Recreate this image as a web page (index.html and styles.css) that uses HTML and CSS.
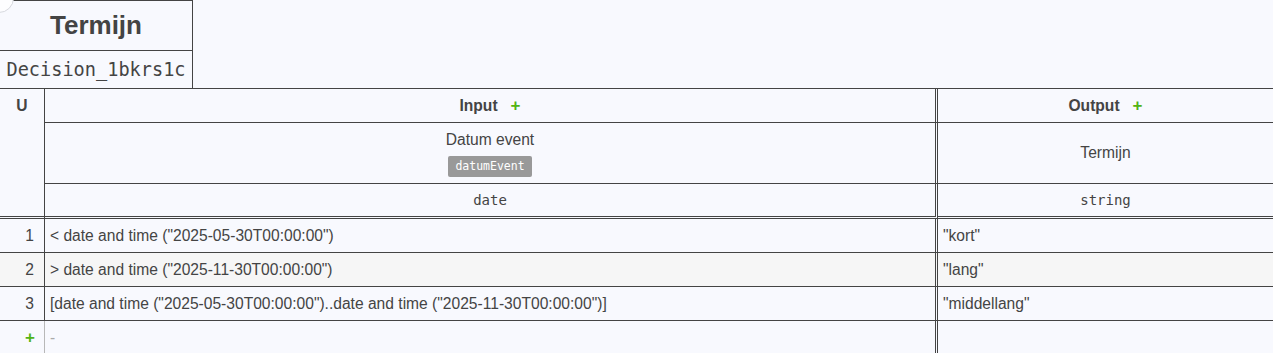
FILE: index.html
```html
<!DOCTYPE html>
<html>
<head>
<meta charset="utf-8">
<link rel="stylesheet" href="styles.css">
</head>
<body>
<div class="page">
  <div class="corner-dot"></div>
  <div class="decision-header">
    <div class="decision-name">Termijn</div>
    <div class="decision-id">Decision_1bkrs1c</div>
  </div>
  <table class="dt">
    <colgroup>
      <col class="c-index">
      <col class="c-input">
      <col class="c-output">
    </colgroup>
    <thead>
      <tr class="r-head">
        <th class="hit" rowspan="3">U</th>
        <th class="input-col">Input<span class="add">+</span></th>
        <th class="output-col">Output<span class="add">+</span></th>
      </tr>
      <tr class="r-label">
        <td class="input-col">
          <div class="label">Datum event</div>
          <span class="badge">datumEvent</span>
        </td>
        <td class="output-col"><div class="label">Termijn</div></td>
      </tr>
      <tr class="r-type">
        <td class="input-col mono">date</td>
        <td class="output-col mono">string</td>
      </tr>
    </thead>
    <tbody>
      <tr class="rule">
        <td class="idx">1</td>
        <td class="input-col">&lt; date and time ("2025-05-30T00:00:00")</td>
        <td class="output-col">"kort"</td>
      </tr>
      <tr class="rule even">
        <td class="idx">2</td>
        <td class="input-col">&gt; date and time ("2025-11-30T00:00:00")</td>
        <td class="output-col">"lang"</td>
      </tr>
      <tr class="rule">
        <td class="idx">3</td>
        <td class="input-col">[date and time ("2025-05-30T00:00:00")..date and time ("2025-11-30T00:00:00")]</td>
        <td class="output-col">"middellang"</td>
      </tr>
      <tr class="add-row">
        <td class="idx add-idx">+</td>
        <td class="input-col dash">-</td>
        <td class="output-col"></td>
      </tr>
    </tbody>
  </table>
</div>
</body>
</html>
```

FILE: styles.css
```css
html, body {
  margin: 0;
  padding: 0;
  background: #f8f9fe;
  overflow: hidden;
}

.page {
  position: relative;
  width: 1273px;
  height: 353px;
  background: #f8f9fe;
  font-family: "Liberation Sans", Arial, sans-serif;
  font-size: 15.6px;
  color: #444;
}

.corner-dot {
  position: absolute;
  left: -16px;
  top: -17px;
  width: 28px;
  height: 28px;
  border-radius: 50%;
  border: 1px solid #d6d8de;
  background: #fdfdff;
  z-index: 2;
}

.decision-header {
  width: 192px;
  border-top: 1px solid #444;
  border-right: 1px solid #444;
}

.decision-name {
  height: 49px;
  border-bottom: 1px solid #444;
  font-weight: bold;
  font-size: 26px;
  display: flex;
  align-items: center;
  justify-content: center;
}

.decision-id {
  height: 37px;
  display: flex;
  align-items: center;
  justify-content: center;
  font-family: "DejaVu Sans Mono", "Liberation Mono", monospace;
  font-size: 18.6px;
}

.dt {
  border-collapse: separate;
  border-spacing: 0;
  table-layout: fixed;
  width: 1273px;
  border-top: 1px solid #444;
}

.c-index { width: 44px; }
.c-input { width: 894px; }
.c-output { width: 335px; }

.dt th, .dt td {
  box-sizing: border-box;
  padding: 0 5px;
  vertical-align: middle;
  border-bottom: 1px solid #444;
  font-weight: normal;
}

.dt .input-col {
  border-left: 1px solid #444;
  border-right: 3px double #444;
}

.dt .hit {
  vertical-align: top;
  text-align: center;
  font-weight: bold;
  line-height: 33px;
  border-bottom: 3px double #444;
  padding: 0;
}

.r-head th {
  height: 34px;
  font-weight: bold;
  text-align: center;
}

.add {
  color: #52b415;
  margin-left: 13px;
  font-weight: bold;
  font-size: 17px;
}

.r-label td {
  height: 61px;
  text-align: center;
}

.label {
  line-height: 20px;
}

.badge {
  display: inline-block;
  margin-top: 6px;
  background: #999;
  color: #fff;
  border-radius: 2px;
  padding: 0 7px;
  height: 21px;
  line-height: 21px;
  font-family: "DejaVu Sans Mono", "Liberation Mono", monospace;
  font-size: 11.5px;
}

.r-type td {
  height: 35px;
  text-align: center;
  border-bottom: 3px double #444;
}

.mono {
  font-family: "DejaVu Sans Mono", "Liberation Mono", monospace;
  font-size: 14px;
}

.rule td {
  height: 34px;
  white-space: nowrap;
}

.rule.even td {
  background: #f6f6f6;
}

.dt .idx {
  text-align: right;
  padding-right: 10px;
}

.add-row td {
  height: 34px;
  border-bottom: none;
}

.dt .add-idx {
  color: #52b415;
  font-weight: bold;
  font-size: 17px;
  padding-right: 9px;
}

.dt .add-row .input-col {
  border-left-color: #b8b8b8;
}

.dash {
  color: #aaa;
}
```
